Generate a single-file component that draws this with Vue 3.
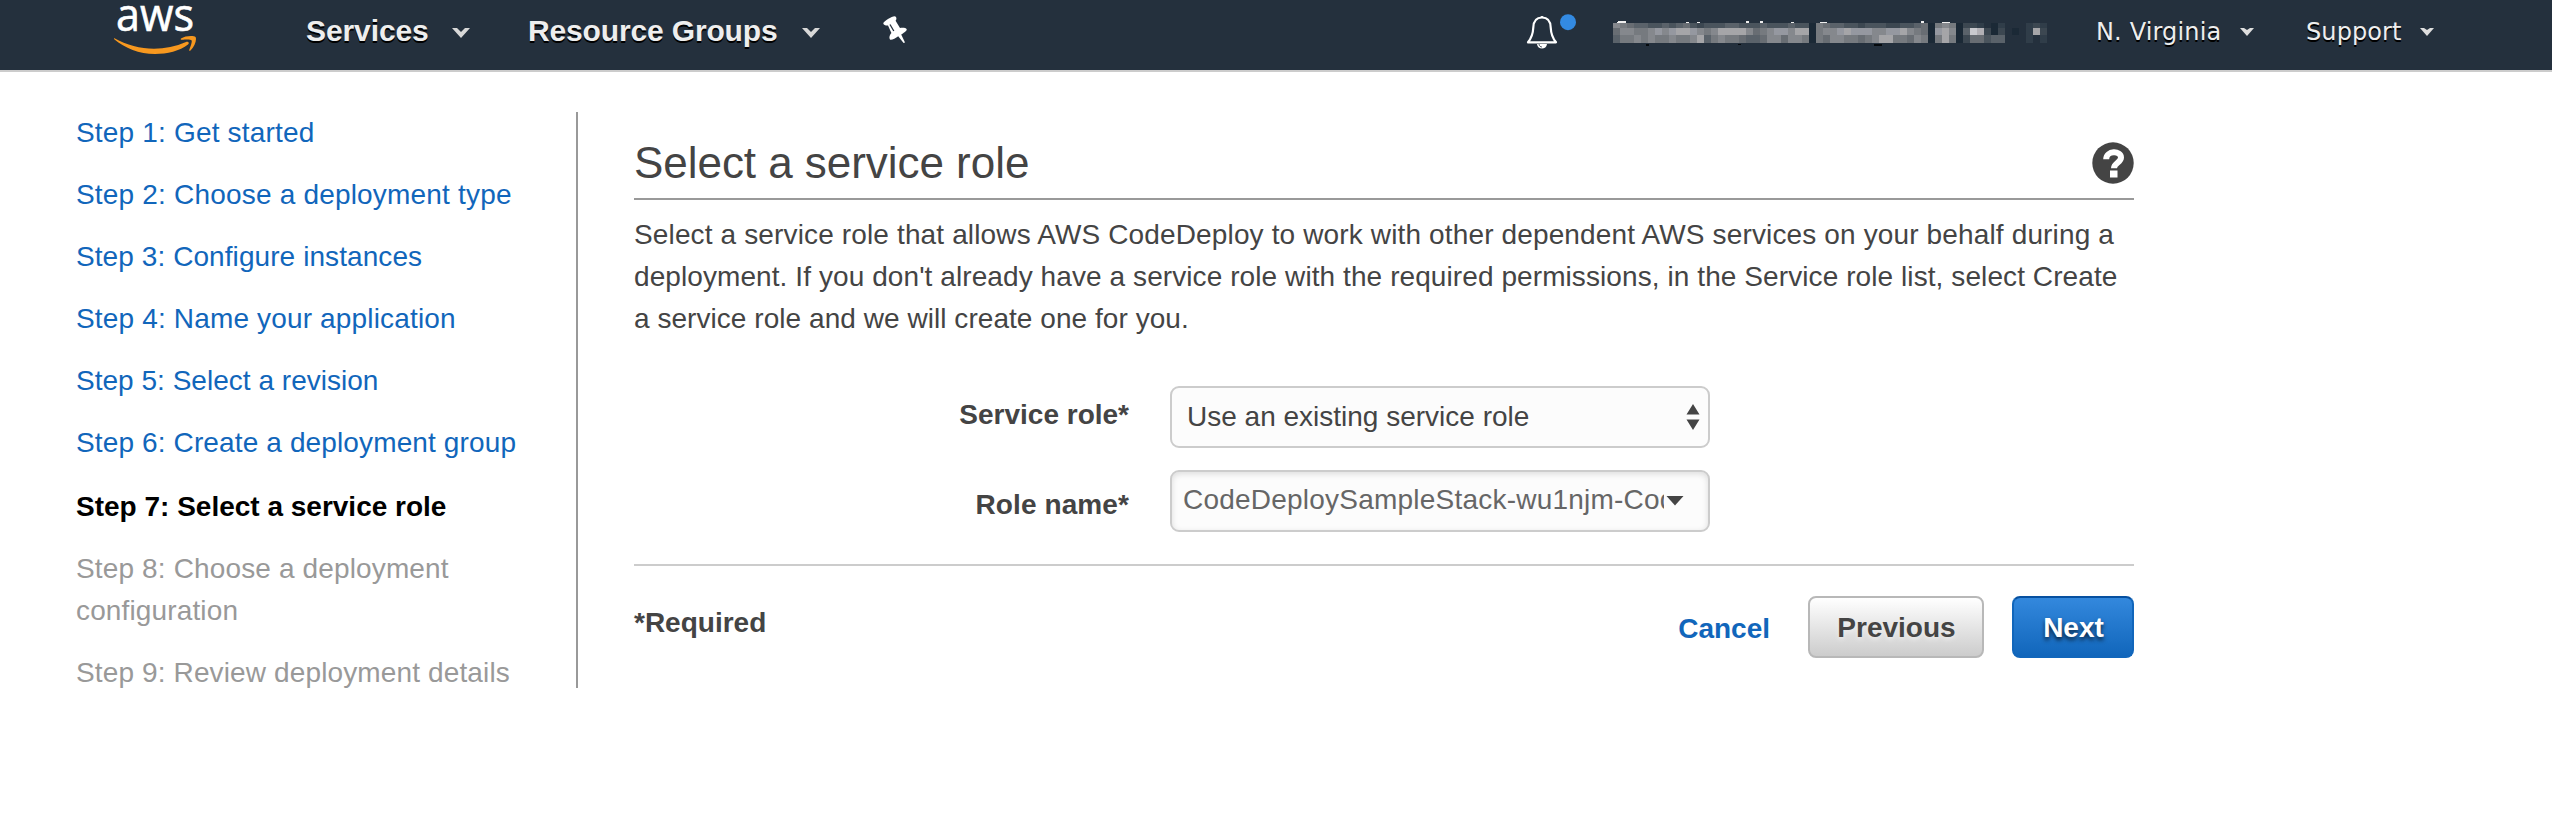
<script setup>
const steps = [
  { label: 'Step 1: Get started', state: 'done', tracking: 0.18 },
  { label: 'Step 2: Choose a deployment type', state: 'done', tracking: 0.19 },
  { label: 'Step 3: Configure instances', state: 'done', tracking: 0.08 },
  { label: 'Step 4: Name your application', state: 'done', tracking: 0.16 },
  { label: 'Step 5: Select a revision', state: 'done', tracking: 0.02 },
  { label: 'Step 6: Create a deployment group', state: 'done', tracking: 0.13 },
  { label: 'Step 7: Select a service role', state: 'current', tracking: 0 },
  { label: 'Step 8: Choose a deployment configuration', state: 'todo', tracking: 0.14 },
  { label: 'Step 9: Review deployment details', state: 'todo', tracking: 0.13 },
]

// Redacted account name: three rows of mosaic cells, "." is the bar colour.
const shades = {
  '.': '#24303d', a: '#1b2936', b: '#303d49', c: '#3c4751', d: '#4a545d',
  e: '#5a626a', f: '#686d73', g: '#767a7f', h: '#85888d', i: '#9598a0',
  j: '#a5a5a8', k: '#b2b0b5', l: '#c9c9ce',
}
const mosaic = [
  { y: 23, h: 5, cells: ['hgfeedd', 'edefdcd', 'ddeeddd', 'edddedd', 'a', 'gfeeddcd', 'ddccddef', 'a', 'ghg', 'a', 'ccb.ab', '...', 'bcb'] },
  { y: 28, h: 7, cells: ['fhhgghi', 'hijjihg', 'hjjjjhf', 'ghiihjj', 'a', 'ghhijiii', 'hhiijhgf', 'a', 'ijh', 'a', 'elkcac', '.a.', 'bjc'] },
  { y: 35, h: 8, cells: ['egghghg', 'ghgghje', 'ghggfee', 'fhhfhhg', 'a', 'gfhhggfg', 'hjjggfhg', 'a', 'gjg', 'a', 'cffdee', '...', 'b.b'] },
].map((row) => ({
  ...row,
  cells: [...row.cells.join('')].map((c, i) => ({ x: i * 7, fill: shades[c] })),
}))
</script>

<template>
  <div class="page">
    <header class="bar">
      <svg class="logo" width="84" height="60" viewBox="112 0 84 60">
        <text x="116" y="31" textLength="78" lengthAdjust="spacingAndGlyphs" class="logo-text">aws</text>
        <path d="M114 38C137 51 163 52 186 42C188 41 190 43 188 44.500C180 51 167 54 155 54C139 54 125 48 114.200 39.200Z" fill="#f7981f" />
        <path d="M181 38.600C185 35.600 194 35.400 195.500 37C197 39 195 46.500 190.500 50.500C189.500 51.200 188.800 50.800 189.300 49.700C190.500 46.700 192.500 41.500 191.500 40.200C190.500 39 185 39.400 182 39.800C180.800 39.900 180.400 39.200 181 38.600Z" fill="#f7981f" />
      </svg>
      <a class="nav services">Services</a>
      <svg class="chev" width="18" height="11" viewBox="0 0 18 11"><path d="M0 0H5L9 4L13 0H18L9 10Z" fill="#d8d8d8" /></svg>
      <a class="nav groups">Resource Groups</a>
      <svg class="chev" width="18" height="11" viewBox="0 0 18 11"><path d="M0 0H5L9 4L13 0H18L9 10Z" fill="#d8d8d8" /></svg>
      <svg class="pin" width="25" height="28" viewBox="0 0 25 28">
        <path d="M.3 7.600C-.3 5.500 9 .2 11.500 .2C14 .3 13.700 3.500 12.600 4.800L17 12C19 11.400 23 11.600 23.700 13.200C24.200 14.600 21 16.800 18.200 18.500L22 26.600L20.600 27L15.200 20.200C12.500 22 8.500 24.600 7 23.600C5.800 22 6.500 19 8.400 17L5 9.500C3.500 9.800 .8 9.400 .3 7.600Z" fill="#fff" />
        <path d="M7 8.500L10.800 15" stroke="#24303d" stroke-width="1.300" />
      </svg>
      <svg class="bell" width="52" height="36" viewBox="0 0 52 36">
        <path d="M16 3.500C10 3.500 7.500 8 7.300 13.500C7 20 5.500 24 2 28.300H30C26.500 24 25 20 24.700 13.500C24.500 8 22 3.500 16 3.500Z" fill="none" stroke="#fff" stroke-width="2.200" stroke-linejoin="round" />
        <path d="M14.200 3.500A2 2.500 0 0 1 17.800 3.500ZM11 30H21C20.500 36 11.500 36 11 30Z" fill="#fff" />
        <path d="M13 30C13.200 32 14.500 33 16 33" fill="none" stroke="#24303d" stroke-width=".8" />
        <circle cx="42" cy="8.200" r="8" fill="#338ae2" />
      </svg>
      <svg class="account" width="441" height="48" viewBox="0 0 441 48" shape-rendering="crispEdges">
        <path d="M5 21.500Q9 20 13 21.500V23H4ZM73 22h3v1h-3ZM84 22h3v1h-3ZM133 21h3v2h-3ZM147 21h3v2h-3ZM178 22h3v1h-3ZM207 22h7v1h-7ZM308 21h3v2h-3ZM329 22h8v1h-8Z" fill="#eee" />
        <g v-for="row in mosaic" :key="row.y">
          <rect v-for="cell in row.cells" :key="cell.x" :x="cell.x" :y="row.y" width="7" :height="row.h" :fill="cell.fill" />
        </g>
        <path d="M33 44h3v2h-3ZM125 44h3v1h-3ZM261 44h8v2h-8Z" fill="#05090d" />
      </svg>
      <a class="menu region">N. Virginia</a>
      <svg class="tri" width="14" height="8" viewBox="0 0 14 8"><path d="M0 0H4L7 2L10 0H14L7 8Z" fill="#dedede" /></svg>
      <a class="menu support">Support</a>
      <svg class="tri" width="14" height="8" viewBox="0 0 14 8"><path d="M0 0H4L7 2L10 0H14L7 8Z" fill="#dedede" /></svg>
    </header>

    <div class="body">
      <ol class="steps">
        <li v-for="s in steps" :key="s.label" :class="s.state" :style="{ letterSpacing: s.tracking + 'px' }">{{ s.label }}</li>
      </ol>

      <main class="content">
        <div class="heading">
          <h1>Select a service role</h1>
          <svg width="42" height="42" viewBox="0 0 42 42">
            <circle cx="21" cy="21" r="20.700" fill="#444" />
            <path d="M14.200 17.200C14.200 8.500 29 8.200 29 15.500C29 20.500 22 21 22 26.300" fill="none" stroke="#fff" stroke-width="6" />
            <rect x="18" y="28.500" width="7.500" height="7" fill="#fff" />
          </svg>
        </div>
        <p class="intro">
          <span class="line-1">Select a service role that allows AWS CodeDeploy to work with other dependent AWS services on your behalf during a</span><br />
          <span class="line-2">deployment. If you don't already have a service role with the required permissions, in the Service role list, select Create</span><br />
          <span class="line-3">a service role and we will create one for you.</span>
        </p>

        <div class="form">
          <label class="label-role">Service role*</label>
          <div class="field select">
            <span class="value">Use an existing service role</span>
            <svg width="14" height="26" viewBox="0 0 14 26"><path d="M7 0L13.500 10.500H.5ZM7 26L13.500 15.500H.5Z" fill="#444" /></svg>
          </div>
          <label class="label-name">Role name*</label>
          <div class="field combo">
            <span class="value">CodeDeploySampleStack-wu1njm-Cod</span>
            <svg width="18" height="10" viewBox="0 0 18 10"><path d="M.5 0H17.500L9 9.500Z" fill="#444" /></svg>
          </div>
        </div>

        <footer class="actions">
          <span class="required">*Required</span>
          <a class="cancel">Cancel</a>
          <button class="btn previous">Previous</button>
          <button class="btn next">Next</button>
        </footer>
      </main>
    </div>
  </div>
</template>

<style>
body {
  margin: 0;
  background: #fff;
}
</style>

<style scoped>
.page {
  width: 2552px;
  height: 818px;
  overflow: hidden;
  background: #fff;
  color: #444;
  font: 28px/42px "Liberation Sans", Arial, sans-serif;
}
.bar {
  box-sizing: border-box;
  height: 72px;
  padding-left: 112px;
  display: flex;
  align-items: flex-start;
  background: #24303d;
  border-bottom: 2px solid #ccc;
  white-space: nowrap;
}
.bar > * {
  flex: none;
}
.logo-text {
  font: 500 45px "Open Sans", sans-serif;
  fill: #fff;
  stroke: #fff;
  stroke-width: 0.6px;
}
.nav {
  box-sizing: border-box;
  font-size: 30px;
  font-weight: bold;
  letter-spacing: -0.1px;
  color: #eee;
  text-shadow: 0 2px 0 #000;
  padding: 10px 0 0 1px;
}
.services {
  margin-left: 109px;
  width: 147px;
}
.groups {
  margin-left: 58px;
  width: 274px;
  padding-left: 0;
  letter-spacing: -0.15px;
}
.chev {
  margin-top: 28px;
}
.pin {
  margin: 16px 0 0 63px;
}
.bell {
  margin: 14px 0 0 618px;
}
.account {
  margin-left: 35px;
}
.menu {
  box-sizing: border-box;
  font: 24px/42px "DejaVu Sans", Verdana, sans-serif;
  color: #eee;
  text-shadow: 0 2px 0 #000;
  padding: 11px 0 0 1px;
}
.region {
  margin-left: 41px;
  width: 145px;
  letter-spacing: 0.15px;
}
.support {
  margin-left: 51px;
  width: 115px;
  letter-spacing: 0.1px;
}
.tri {
  margin-top: 28px;
}
.body {
  display: flex;
  padding-top: 40px;
}
.steps {
  box-sizing: border-box;
  width: 578px;
  height: 576px;
  margin: 0;
  padding: 0 50px 0 76px;
  border-right: 2px solid #999;
  list-style: none;
}
.steps li {
  margin-bottom: 20px;
}
.done {
  color: #1166bb;
}
.steps .current {
  padding-top: 2px;
  font-weight: bold;
  color: #000;
}
.todo {
  color: #999;
}
.content {
  width: 1500px;
  margin-left: 56px;
}
.heading {
  box-sizing: border-box;
  height: 88px;
  padding-top: 30px;
  border-bottom: 2px solid #999;
  display: flex;
  justify-content: space-between;
}
h1 {
  margin: 0;
  font-size: 44px;
  line-height: 42px;
  font-weight: normal;
  letter-spacing: -0.04px;
}
.intro {
  margin: 14px 0 0;
  white-space: nowrap;
}
.line-1 {
  letter-spacing: 0.14px;
}
.line-2 {
  letter-spacing: 0.085px;
}
.line-3 {
  letter-spacing: 0.05px;
}
.form {
  display: grid;
  grid-template-columns: 495px 540px;
  column-gap: 41px;
  row-gap: 22px;
  margin-top: 46px;
  padding-bottom: 32px;
  border-bottom: 2px solid #ccc;
}
.form label {
  text-align: right;
  font-weight: bold;
  padding-top: 8px;
}
.form .label-name {
  padding-top: 14px;
  letter-spacing: 0.1px;
}
.field {
  box-sizing: border-box;
  height: 62px;
  display: flex;
  align-items: center;
  border: 2px solid #ccc;
  border-radius: 9px;
  background: #fcfcfc;
  white-space: nowrap;
}
.field .value {
  overflow: hidden;
}
.select {
  justify-content: space-between;
  padding: 0 8px 0 15px;
}
.combo {
  padding-left: 11px;
  color: #666;
  box-shadow: inset 0 2px 6px rgba(0, 0, 0, 0.13);
}
.combo .value {
  width: 481px;
  margin-bottom: 2px;
  letter-spacing: 0.22px;
}
.combo svg {
  margin-left: 2px;
}
.actions {
  display: flex;
  align-items: flex-start;
  padding-top: 30px;
  font-weight: bold;
}
.required {
  margin-top: 6px;
}
.cancel {
  margin: 12px 38px 0 auto;
  color: #1166bb;
}
.btn {
  box-sizing: border-box;
  height: 62px;
  padding: 2px 0 0 1px;
  border-radius: 8px;
  font: bold 28px/42px "Liberation Sans", Arial, sans-serif;
}
.previous {
  width: 176px;
  margin-right: 28px;
  color: #444;
  border: 2px solid #b8b8b8;
  background: linear-gradient(#fff, #ccc);
  text-shadow: 0 2px 4px #eee;
}
.next {
  width: 122px;
  color: #fff;
  border: 2px solid #1166bb;
  border-top-color: #0650a0;
  background: linear-gradient(#3388dd, #1166bb);
  text-shadow: 0 3px 4px rgba(0, 0, 0, 0.7);
}
</style>
